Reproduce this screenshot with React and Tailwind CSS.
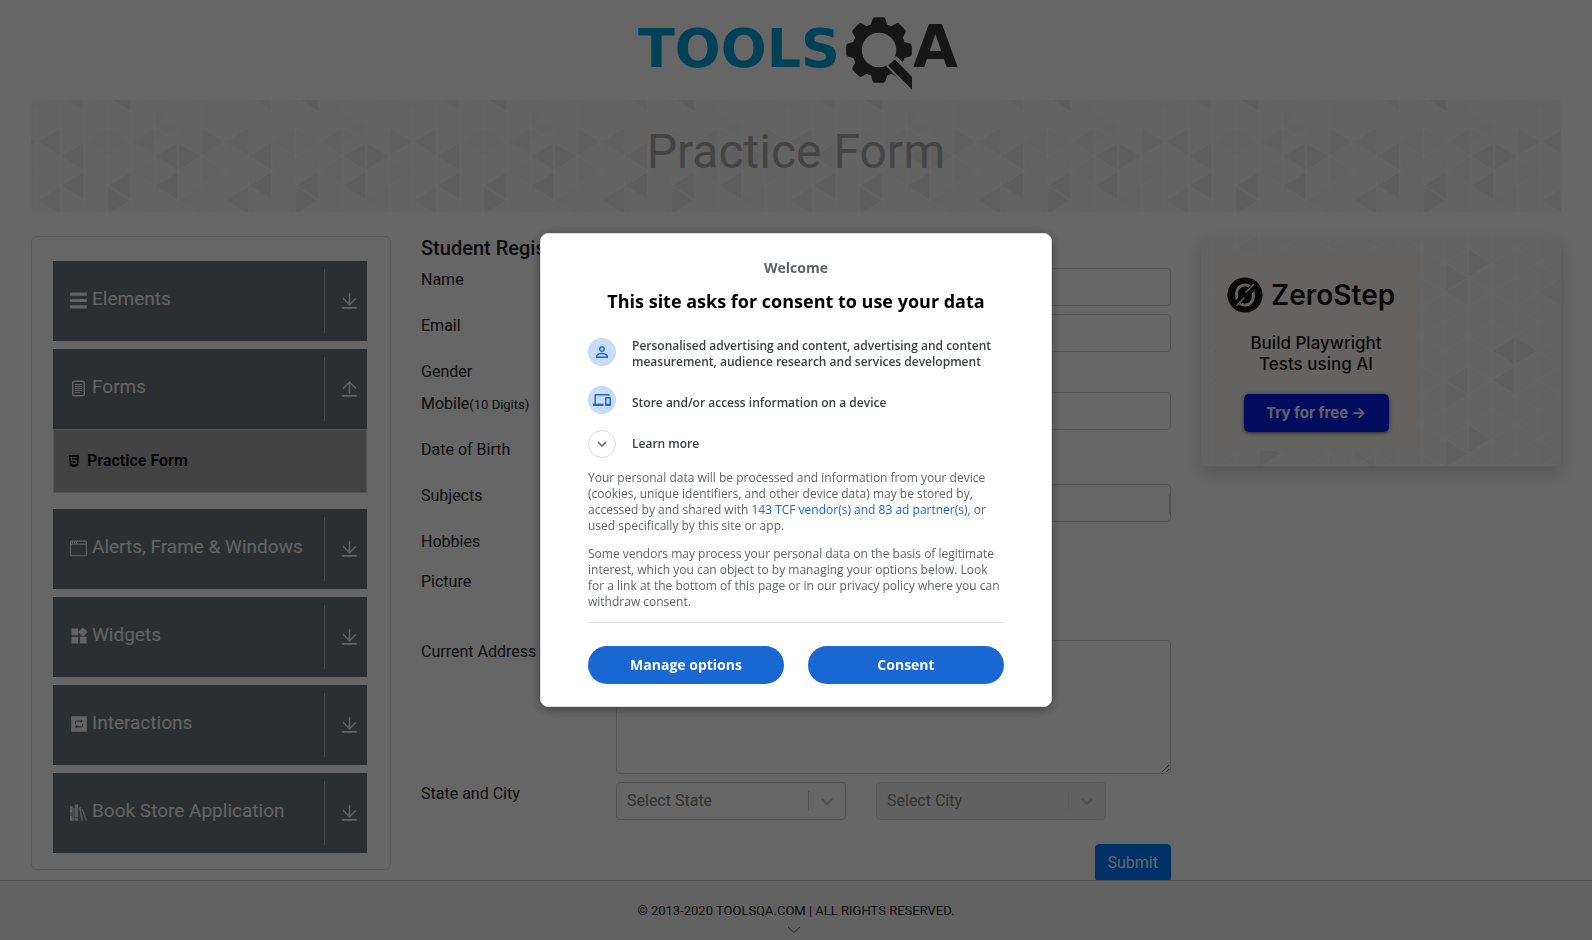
import React from "react";
import { MdWidgets, MdPersonOutline, MdDevices, MdExpandMore } from "react-icons/md";
import { AiFillInteraction } from "react-icons/ai";
import { FaHtml5 } from "react-icons/fa";

/* ---------- drawings ---------- */

function Logo() {
  const teeth = [0, 45, 90, 135, 180, 225, 270, 315];
  return (
    <svg width="340" height="76" viewBox="0 0 340 76" role="img" aria-label="ToolsQA" className="block">
      <text x="0" y="51" fontFamily="DejaVu Sans" fontWeight="700" fontSize="54" fill="#00a3dc">
        TOOLS
      </text>
      <g transform="translate(241 34)" fill="#383838">
        {teeth.map((a) => (
          <path key={a} d="M-8.5 -24 L-6.5 -31 Q-6 -32.8 -4 -32.8 H4 Q6 -32.8 6.5 -31 L8.5 -24 Z" transform={`rotate(${a})`} />
        ))}
        <circle r="22" fill="none" stroke="#383838" strokeWidth="9.5" />
        <path d="M7 16 L17 6 L34 22 V44 Z" fill="#fff" />
        <path d="M9 15.5 L16 9.5 L33 27 V39.5 Z" />
      </g>
      <text x="275" y="51" fontFamily="DejaVu Sans" fontWeight="700" fontSize="58" fill="#383838">
        A
      </text>
    </svg>
  );
}

/* side: -1 points left (tip on column k), 1 points right (base on column k) */
function trianglePoints(x0, step, k, y, side) {
  const h = 13.4;
  const left = x0 + k * step + 0.6;
  const right = x0 + (k + 1) * step - 0.6;
  return side < 0
    ? `${left},${y} ${right},${y - h} ${right},${y + h}`
    : `${left},${y - h} ${right},${y} ${left},${y + h}`;
}

const HALF = 14.667;

function GridLines({ x0, y0, step, cols, rows }) {
  const lines = [];
  for (let k = 0; k <= cols; k++) {
    const x = x0 + k * step;
    lines.push(`M${x} -40 V${rows * 2 * HALF + 40}`);
    for (let r = -2; r <= rows; r++) {
      const y = y0 + r * 2 * HALF + (k % 2 ? HALF : 0);
      lines.push(`M${x} ${y} l${step} ${HALF} M${x} ${y} l${step} ${-HALF}`);
    }
  }
  return <path d={lines.join(" ")} stroke="#fcfcfc" strokeWidth="1.2" fill="none" />;
}

const bannerTriangles = [
  [1, 56.3, -1, "#ededed"],
  [5, 56.3, -1, "#ededed"],
  [6, 56.3, 1, "#ededed"],
  [1, 85.7, -1, "#ededed"],
  [3, 85.7, -1, "#ededed"],
  [5, 85.7, -1, "#ededed"],
  [3, 100.3, 1, "#ededed"],
  [3, -2.3, -1, "#ededed"],
  [0, 100.3, -1, "#f0f0f0"],
  [0, 41.7, -1, "#f1f1f1"],
  [7, 41.7, 1, "#f1f1f1"],
  [2, 41.7, -1, "#f4f4f4"],
  [3, 41.7, 1, "#f4f4f4"],
  [4, 41.7, -1, "#f3f3f3"],
  [1, -2.3, -1, "#f2f2f2"],
  [5, 27, 1, "#f5f5f5"],
  [4, 71, -1, "#f5f5f5"],
  [7, 71, 1, "#f5f5f5"],
  [6, 100.3, -1, "#f5f5f5"],
];

function BannerPattern() {
  return (
    <svg className="absolute inset-0 h-full w-full" aria-hidden="true">
      <defs>
        <pattern id="banner-tile" x="6" y="0" width="188" height="112" patternUnits="userSpaceOnUse">
          <rect width="188" height="112" fill="#f7f7f7" />
          {bannerTriangles.map(([k, y, side, fill], i) => (
            <polygon key={i} points={trianglePoints(0, 23.5, k, y, side)} fill={fill} />
          ))}
          <GridLines x0={0} y0={12.3} step={23.5} cols={8} rows={4} />
        </pattern>
      </defs>
      <rect width="100%" height="100%" fill="url(#banner-tile)" />
    </svg>
  );
}

const adTriangles = [
  [11, 27, 1, "#f0f0f0"],
  [10, 41.7, 1, "#f0f0f0"],
  [10, 56.3, -1, "#f2f2f2"],
  [14, 56.3, -1, "#f2f2f2"],
  [12, 115, -1, "#eeeeee"],
  [13, 115, 1, "#eeeeee"],
  [10, 144.3, -1, "#efefef"],
  [12, 144.3, -1, "#eeeeee"],
  [10, 159, 1, "#f2f2f2"],
  [11, 203, 1, "#f0f0f0"],
  [10, 217.7, 1, "#f0f0f0"],
  [1, 12.3, -1, "#f4f4f4"],
  [2, 217.7, 1, "#f0f0f0"],
  [6, 217.7, -1, "#f2f2f2"],
  [0, 115, -1, "#eeeeee"],
  [0, 144.3, -1, "#eeeeee"],
];

function AdPattern() {
  return (
    <svg className="absolute inset-0 h-full w-full" aria-hidden="true">
      <rect width="100%" height="100%" fill="#f8f8f8" />
      {adTriangles.map(([k, y, side, fill], i) => (
        <polygon key={i} points={trianglePoints(11, 23.3, k, y, side)} fill={fill} />
      ))}
      <GridLines x0={11} y0={-2.3} step={23.3} cols={15} rows={8} />
    </svg>
  );
}

function ZeroMark() {
  return (
    <svg width="36" height="36" viewBox="0 0 36 36" aria-hidden="true">
      <circle cx="18" cy="18" r="17.6" fill="#161616" />
      <rect x="9.7" y="8" width="16.6" height="20" rx="8" fill="none" stroke="#f9f5ef" strokeWidth="3" />
      <rect x="14.5" y="12.5" width="7" height="11" rx="3.5" fill="#161616" />
      <path d="M7.5 28 L28 7.5" stroke="#161616" strokeWidth="5" />
      <path d="M9.5 28.8 L17.5 20.5 M18.5 15.5 L27 7" stroke="#f9f5ef" strokeWidth="1.4" />
      <path d="M14 26.5 L28.5 11.5" stroke="#161616" strokeWidth="1.4" />
    </svg>
  );
}

function BarsIcon() {
  return (
    <svg width="17" height="17" viewBox="0 0 17 17" fill="currentColor" aria-hidden="true">
      <rect x="0" y="0.6" width="17" height="3.2" rx="1" />
      <rect x="0" y="6.9" width="17" height="3.2" rx="1" />
      <rect x="0" y="13.2" width="17" height="3.2" rx="1" />
    </svg>
  );
}

function FormIcon() {
  return (
    <svg width="17" height="17" viewBox="0 0 17 17" fill="none" stroke="currentColor" aria-hidden="true">
      <rect x="2.7" y="1.2" width="11.6" height="14.6" rx="2" strokeWidth="1.4" />
      <path d="M5 4.5h7M5 6.5h7M5 8.5h7M5 10.5h7M5 12.5h5" strokeWidth="1" />
    </svg>
  );
}

function WindowIcon() {
  return (
    <svg width="17" height="17" viewBox="0 0 17 17" fill="none" stroke="currentColor" aria-hidden="true">
      <rect x="0.6" y="1.1" width="15.8" height="14.6" rx="0.8" strokeWidth="1.1" />
      <path d="M0.6 4.1h15.8" strokeWidth="1.1" />
      <path d="M2 2.6h1M4 2.6h1M6 2.6h1" strokeWidth="1.2" />
    </svg>
  );
}

function BooksIcon() {
  return (
    <svg width="17" height="17" viewBox="0 0 17 17" fill="currentColor" aria-hidden="true">
      <path d="M0 2.2h2.6v14.6H0z" />
      <path d="M3.2 4h1v12.8h-1z" opacity="0.8" />
      <path d="M4.8 0.4h3.4v16.4H4.8z" opacity="0.85" />
      <path d="M9 3.4l1.6-.3 2.4 13.5-1.6.3z" opacity="0.8" />
      <path d="M11.6 5.2l1.2-.5 4.2 11.6-1.2.5z" opacity="0.8" />
      <path d="M0 9.2h2.6M0 11.2h2.6M4.8 13.5h3.4" stroke="#6c757d" strokeWidth="0.7" />
    </svg>
  );
}

function ToggleArrow({ up }) {
  return (
    <svg width="17" height="18" viewBox="0 0 17 18" fill="none" stroke="currentColor" strokeLinecap="round" aria-hidden="true">
      {up ? (
        <path d="M8.5 13V2.2M2.4 8.2L8.5 2l6.1 6.2" strokeWidth="1.4" />
      ) : (
        <path d="M8.5 1.8V12.6M2.4 6.6L8.5 12.8l6.1-6.2" strokeWidth="1.4" />
      )}
      <path d="M1.8 15.8h13.4" strokeWidth="1.7" />
    </svg>
  );
}

function SelectChevron() {
  return (
    <svg width="20" height="20" viewBox="0 0 20 20" fill="#ccc" aria-hidden="true">
      <path d="M4.516 7.548c0.436-0.446 1.043-0.481 1.576 0l3.908 3.747 3.908-3.747c0.533-0.481 1.141-0.446 1.574 0 0.436 0.445 0.408 1.197 0 1.615-0.406 0.418-4.695 4.502-4.695 4.502-0.217 0.223-0.502 0.335-0.787 0.335s-0.57-0.112-0.789-0.335c0 0-4.287-4.084-4.695-4.502s-0.436-1.17 0-1.615z" />
    </svg>
  );
}

/* ---------- sidebar ---------- */

const groups = [
  { title: "Elements", icon: <BarsIcon /> },
  { title: "Forms", icon: <FormIcon />, open: true },
  { title: "Alerts, Frame & Windows", icon: <WindowIcon /> },
  { title: "Widgets", icon: <MdWidgets size={20} className="shrink-0" /> },
  { title: "Interactions", icon: <AiFillInteraction size={20} className="shrink-0" /> },
  { title: "Book Store Application", icon: <BooksIcon /> },
];

function Sidebar() {
  return (
    <nav className="rounded-md border border-[#dfdfdf] pt-6 pr-[23px] pb-4 pl-[21px]">
      <ul className="flex flex-col gap-2">
        {groups.map((g) => (
          <li key={g.title} className={g.open ? "pb-2" : ""}>
            <button
              type="button"
              aria-expanded={Boolean(g.open)}
              className="flex h-20 w-full items-center bg-[#6c757d] pr-[9px] pl-[17px] text-left text-[#f8f8f8]"
            >
              <span className="flex w-[17px] justify-center pb-0.5">{g.icon}</span>
              <span className="flex-1 pb-1 pl-[5px] text-[19px] leading-6">{g.title}</span>
              <span className="h-16 border-l border-[#b0b4b8]" />
              <span className="pl-4">
                <ToggleArrow up={g.open} />
              </span>
            </button>
            {g.open && (
              <a
                href="#practice-form"
                className="flex h-16 items-center gap-1.5 border border-[#d0d2d5] bg-[#a9a9a9] pl-[13px] text-[16px] font-bold text-[#111]"
              >
                <FaHtml5 size={14} />
                Practice Form
              </a>
            )}
          </li>
        ))}
      </ul>
    </nav>
  );
}

/* ---------- form ---------- */

const fieldBox = "block h-[38px] w-full rounded border border-[#ced4da] bg-white px-3";

function Row({ label, htmlFor, small, children, className = "" }) {
  return (
    <div className={`flex ${className}`}>
      <div className="w-[26%] leading-6">
        {htmlFor ? (
          <label htmlFor={htmlFor}>
            {label}
            {small && <small className="text-[13px]">{small}</small>}
          </label>
        ) : (
          <span>{label}</span>
        )}
      </div>
      <div className="min-w-0 flex-1">{children}</div>
    </div>
  );
}

function PickList({ label, disabled }) {
  return (
    <div className="relative w-[230px]">
      <select
        aria-label={label}
        disabled={disabled}
        className={
          disabled
            ? "block h-[38px] w-full appearance-none rounded border border-[#e0e0e0] bg-[#f2f2f2] px-2.5 text-[#808080] opacity-100"
            : "block h-[38px] w-full appearance-none rounded border border-[#ccc] bg-white px-2.5 text-[#808080]"
        }
      >
        <option>{label}</option>
      </select>
      <span className="pointer-events-none absolute inset-y-0 right-0 flex items-center">
        <span className={disabled ? "h-5 border-l border-[#e0e0e0]" : "h-5 border-l border-[#ccc]"} />
        <span className="pr-[9px] pl-2">
          <SelectChevron />
        </span>
      </span>
    </div>
  );
}

function RegistrationForm() {
  return (
    <form id="practice-form">
      <h2 className="mb-2 text-[20px] leading-6 font-medium">Student Registration Form</h2>
      <div className="flex flex-col gap-2">
        <Row label="Name" htmlFor="name">
          <input id="name" type="text" className={fieldBox} />
        </Row>
        <Row label="Email" htmlFor="email">
          <input id="email" type="email" className={fieldBox} />
        </Row>
        <Row label="Gender" />
        <Row label="Mobile" small="(10 Digits)" htmlFor="mobile">
          <input id="mobile" type="tel" className={fieldBox} />
        </Row>
        <Row label="Date of Birth" htmlFor="birth">
          <input id="birth" type="text" className="block h-[38px] w-52 rounded border border-[#ced4da] px-3" />
        </Row>
        <Row label="Subjects" htmlFor="subjects">
          <div className="relative">
            <input id="subjects" type="text" className="block h-[38px] w-full rounded border border-[#ccc] bg-white px-3" />
            <span className="absolute top-2.5 right-0 h-5 w-0.5 bg-[#ccc]" />
          </div>
        </Row>
        <Row label="Hobbies" className="min-h-8" />
        <Row label="Picture" htmlFor="picture" className="min-h-[62px]">
          <input id="picture" type="file" className="block w-52 text-sm" />
        </Row>
        <Row label="Current Address" htmlFor="address">
          <textarea id="address" className="block h-[134px] w-full resize rounded border border-[#ced4da] bg-white px-3 py-1.5" />
        </Row>
        <Row label="State and City">
          <div className="flex gap-[30px]">
            <PickList label="Select State" />
            <PickList label="Select City" disabled />
          </div>
        </Row>
      </div>
      <div className="mt-6 flex justify-end">
        <button type="submit" className="h-[38px] rounded border border-[#007bff] bg-[#007bff] px-3 text-[16px] text-white">
          Submit
        </button>
      </div>
    </form>
  );
}

/* ---------- promo ---------- */

function Promo() {
  return (
    <a
      href="#zerostep"
      className="relative block p-[15px] shadow-[0_8px_16px_rgba(0,0,0,0.15)] font-['Inter',sans-serif] text-[#161616]"
    >
      <AdPattern />
      <span className="relative flex h-[200px] w-[200px] flex-col items-center bg-[#fdf8f2] pt-[26px]">
        <span className="flex items-center gap-2 self-start pl-[11px]">
          <ZeroMark />
          <span className="text-[28px] leading-9 font-semibold">ZeroStep</span>
        </span>
        <span className="mt-5 text-center text-[17px] leading-[21px] font-medium">
          Build Playwright
          <br />
          Tests using AI
        </span>
        <span className="mt-[19px] flex h-[38px] w-[145px] items-center justify-center rounded-[5px] bg-[#0420ea] text-[15px] font-bold text-[#f4f4ff] shadow-[0_1px_4px_rgba(0,0,0,0.6)]">
          Try for free →
        </span>
      </span>
    </a>
  );
}

/* ---------- consent dialog ---------- */

function Purpose({ icon, children, className = "", textClass = "" }) {
  return (
    <li className={`flex gap-4 ${className}`}>
      <span className="flex h-7 w-7 shrink-0 items-center justify-center rounded-full bg-[#c9dcf6] text-[#1967d2]">{icon}</span>
      <span className={`text-[12px] leading-4 font-semibold text-[#3c4043] ${textClass}`}>{children}</span>
    </li>
  );
}

const consentButton = "h-[38px] flex-1 rounded-full bg-[#1967d2] pb-0.5 text-[14px] font-bold text-white";

function ConsentDialog() {
  return (
    <div className="fixed inset-0 flex items-center justify-center bg-black/60">
      <section
        role="dialog"
        aria-modal="true"
        aria-labelledby="consent-title"
        className="w-[512px] rounded-lg border border-[#dadce0] bg-white px-[47px] pt-[22px] pb-[22px] font-['Open_Sans',sans-serif] shadow-[0_2px_10px_rgba(0,0,0,0.4)]"
      >
        <p className="text-center text-[14px] leading-6 font-bold text-[#5f6368]">Welcome</p>
        <h1 id="consent-title" className="mt-[9px] text-center text-[18px] leading-6 font-bold text-black">
          This site asks for consent to use your data
        </h1>
        <ul className="mt-[25px]">
          <Purpose icon={<MdPersonOutline size={18} />}>
            Personalised advertising and content, advertising and content measurement, audience research and services
            development
          </Purpose>
          <Purpose icon={<MdDevices size={18} />} className="mt-4" textClass="pt-[9px]">
            Store and/or access information on a device
          </Purpose>
        </ul>
        <button type="button" className="mt-4 flex items-center gap-4 text-[12px] leading-4 font-semibold text-[#3c4043]">
          <span className="flex h-7 w-7 items-center justify-center rounded-full border border-[#dadce0] text-[#5f6368]">
            <MdExpandMore size={18} />
          </span>
          Learn more
        </button>
        <div className="mt-3 flex flex-col gap-3 border-b border-[#dadce0] pb-3 text-[12px] leading-4 text-[#5f6368]">
          <p>
            Your personal data will be processed and information from your device (cookies, unique identifiers, and other
            device data) may be stored by, accessed by and shared with{" "}
            <a href="#vendors" className="text-[#1967d2]">
              143 TCF vendor(s) and 83 ad partner(s)
            </a>
            , or used specifically by this site or app.
          </p>
          <p>
            Some vendors may process your personal data on the basis of legitimate interest, which you can object to by
            managing your options below. Look for a link at the bottom of this page or in our privacy policy where you can
            withdraw consent.
          </p>
        </div>
        <div className="mt-[23px] flex gap-6">
          <button type="button" className={consentButton}>
            Manage options
          </button>
          <button type="button" className={consentButton}>
            Consent
          </button>
        </div>
      </section>
    </div>
  );
}

export default function App() {
  return (
    <div className="min-h-screen bg-white font-['Roboto',sans-serif] text-[16px] text-[#212529]">
      <header className="flex justify-center pt-4 pb-2 pl-6">
        <a href="#home">
          <Logo />
        </a>
      </header>
      <div className="px-4">
        <div className="px-[15px]">
          <div className="relative flex h-28 items-start justify-center overflow-hidden pt-6">
            <BannerPattern />
            <h1 className="relative text-[48px] leading-[56px] text-[#aaa]">Practice Form</h1>
          </div>
        </div>
        <main className="flex items-start pt-6">
          <div className="w-1/4 px-[15px]">
            <Sidebar />
          </div>
          <div className="w-1/2 px-[15px]">
            <RegistrationForm />
          </div>
          <aside className="w-1/4 px-[15px]">
            <Promo />
          </aside>
        </main>
      </div>
      <footer className="fixed inset-x-0 bottom-0 flex h-[60px] flex-col items-center border-t border-[#c6c6c6] bg-[#f4f4f4] pt-5 text-[13px] leading-5">
        <span>© 2013-2020 TOOLSQA.COM | ALL RIGHTS RESERVED.</span>
        <svg width="16" height="12" viewBox="0 0 16 12" fill="none" stroke="#777" strokeWidth="1" className="mt-[3px] mr-1" aria-hidden="true">
          <path d="M2 3l6 5.5L14 3" />
        </svg>
      </footer>
      <ConsentDialog />
    </div>
  );
}
